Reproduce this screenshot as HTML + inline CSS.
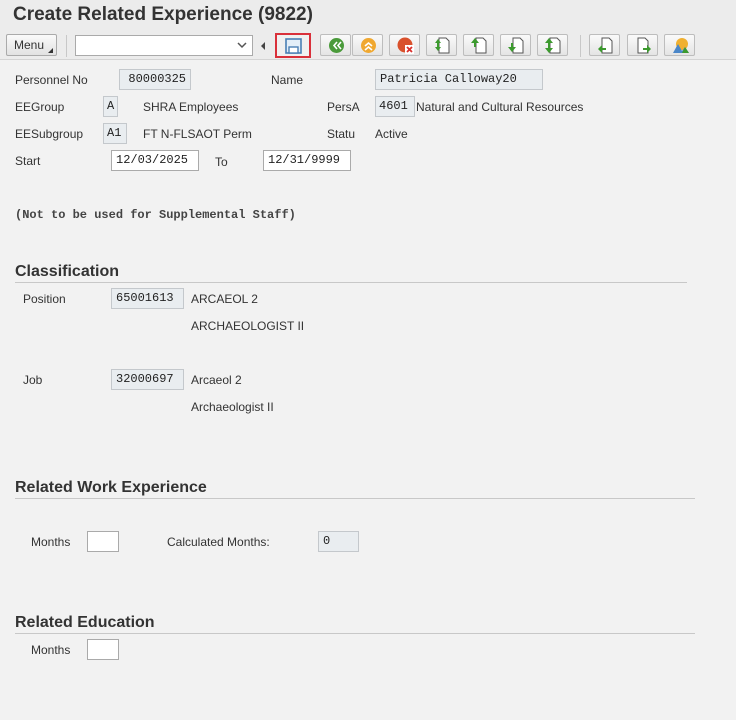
<!DOCTYPE html>
<html><head><meta charset="utf-8">
<style>
*{box-sizing:border-box;margin:0;padding:0}
body{width:736px;height:720px;background:#f2f2f2;font-family:"Liberation Sans",Arial,sans-serif;font-size:12px;color:#333;position:relative;overflow:hidden}
.a{position:absolute;white-space:nowrap}
.hdr{position:absolute;left:0;top:0;width:736px;height:60px;background:#ececec;border-bottom:1px solid #d4d4d4}
.t{position:absolute;left:13px;top:4px;font-size:19px;font-weight:bold;color:#333}
.btn{position:absolute;top:34px;height:22px;width:31px;border:1px solid #bdbdbd;background:linear-gradient(#fafafa,#e4e4e4);border-radius:2px}
.btn svg{position:absolute;left:7px;top:2px}
.lbl{position:absolute;font-size:12px;color:#333;white-space:nowrap}
.in{position:absolute;height:21px;border:1px solid #aaa;background:#fff;font-family:"Liberation Mono",monospace;font-size:12px;line-height:19px;padding-left:4px;color:#222}
.ro{background:#e9edf0;border-color:#c4c8cc}
h2{position:absolute;left:15px;font-size:16px;font-weight:bold;color:#333}
.ln{position:absolute;left:15px;height:1px;background:#c8c8c8}
</style></head><body>
<div class="hdr"></div>
<div class="t">Create Related Experience (9822)</div>
<div class="a" style="left:6px;top:34px;width:51px;height:22px;border:1px solid #aaa;background:linear-gradient(#fafafa,#e2e2e2);font-size:12px;line-height:20px;padding-left:7px;border-radius:2px">Menu<span style="position:absolute;right:3px;bottom:2px;width:0;height:0;border-left:5px solid transparent;border-bottom:5px solid #333"></span></div>
<div class="a" style="left:66px;top:35px;width:1px;height:22px;background:#c8c8c8"></div>
<div class="a" style="left:75px;top:35px;width:178px;height:21px;border:1px solid #aaa;background:#fff"><svg style="position:absolute;right:5px;top:6px" width="10" height="7"><path d="M1 1 L5 5 L9 1" stroke="#555" stroke-width="1.5" fill="none"/></svg></div>
<div class="a" style="left:261px;top:42px;width:0;height:0;border-top:4px solid transparent;border-bottom:4px solid transparent;border-right:4px solid #444"></div>
<div class="a" style="left:275px;top:33px;width:36px;height:25px;border:2px solid #d9303a;background:#f0f0f0"><svg style="position:absolute;left:8px;top:3px" width="17" height="16"><rect x="1" y="1" width="15" height="14" fill="#e3eef8" stroke="#4a7fb5" stroke-width="1.6"/><rect x="4" y="9" width="9" height="6" fill="#fff" stroke="#4a7fb5" stroke-width="1.4"/></svg></div>
<div class="btn" style="left:320px"><svg width="17" height="17"><circle cx="8.5" cy="8.5" r="7.5" fill="#4a9a3a"/><path d="M9 5 L6 8.5 L9 12 M13 5 L10 8.5 L13 12" stroke="#fff" stroke-width="1.6" fill="none"/></svg></div>
<div class="btn" style="left:352px"><svg width="17" height="17"><circle cx="8.5" cy="8.5" r="7.5" fill="#f0a830"/><path d="M5 9 L8.5 6 L12 9 M5 13 L8.5 10 L12 13" stroke="#fff" stroke-width="1.6" fill="none"/></svg></div>
<div class="btn" style="left:389px"><svg width="17" height="17"><circle cx="8" cy="8" r="7.5" fill="#d9512c"/><rect x="8" y="8" width="9" height="9" fill="#fff"/><path d="M10 10 L15 15 M15 10 L10 15" stroke="#d9302c" stroke-width="1.8"/></svg></div>
<div class="btn" style="left:426px"><svg width="17" height="17"><path d="M5 1 H12 L15 4 V16 H5 Z" fill="#fff" stroke="#555"/><path d="M4 2 L7 6 H1 Z M1 10 H7 L4 14 Z" fill="#3c9a2e"/><rect x="3" y="5" width="2" height="6" fill="#3c9a2e"/></svg></div>
<div class="btn" style="left:463px"><svg width="17" height="17"><path d="M5 1 H12 L15 4 V16 H5 Z" fill="#fff" stroke="#555"/><path d="M4 1 L8 6 H0 Z" fill="#3c9a2e"/><rect x="3" y="5" width="2" height="5" fill="#3c9a2e"/></svg></div>
<div class="btn" style="left:500px"><svg width="17" height="17"><path d="M5 1 H12 L15 4 V16 H5 Z" fill="#fff" stroke="#555"/><path d="M0 10 H8 L4 15 Z" fill="#3c9a2e"/><rect x="3" y="6" width="2" height="5" fill="#3c9a2e"/></svg></div>
<div class="btn" style="left:537px"><svg width="17" height="17"><path d="M5 1 H12 L15 4 V16 H5 Z" fill="#fff" stroke="#555"/><path d="M4 1 L8 6 H0 Z M0 11 H8 L4 16 Z" fill="#3c9a2e"/><rect x="3" y="5" width="2" height="7" fill="#3c9a2e"/></svg></div>
<div class="a" style="left:580px;top:35px;width:1px;height:22px;background:#c8c8c8"></div>
<div class="btn" style="left:589px"><svg width="17" height="17"><path d="M5 1 H12 L15 4 V16 H5 Z" fill="#fff" stroke="#555"/><path d="M1 12 L5 8 V16 Z" fill="#3c9a2e"/><rect x="4" y="11" width="5" height="2" fill="#3c9a2e"/></svg></div>
<div class="btn" style="left:627px"><svg width="17" height="17"><path d="M3 1 H10 L13 4 V16 H3 Z" fill="#fff" stroke="#555"/><path d="M16 12 L12 8 V16 Z" fill="#3c9a2e"/><rect x="8" y="11" width="5" height="2" fill="#3c9a2e"/></svg></div>
<div class="btn" style="left:664px"><svg width="18" height="17"><circle cx="10" cy="7" r="6" fill="#f0b030"/><path d="M1 16 L6 7 L10 14 L13 10 L17 16 Z" fill="#4a86c8"/><path d="M10 16 L13 10 L17 16 Z" fill="#3c9a2e"/></svg></div>

<div class="lbl" style="left:15px;top:73px">Personnel No</div>
<div class="in ro" style="left:119px;top:69px;width:72px;text-align:right;padding-right:4px">80000325</div>
<div class="lbl" style="left:271px;top:73px">Name</div>
<div class="in ro" style="left:375px;top:69px;width:168px">Patricia Calloway20</div>
<div class="lbl" style="left:15px;top:100px">EEGroup</div>
<div class="in ro" style="left:103px;top:96px;width:15px;padding-left:3px">A</div>
<div class="lbl" style="left:143px;top:100px">SHRA Employees</div>
<div class="lbl" style="left:327px;top:100px">PersA</div>
<div class="in ro" style="left:375px;top:96px;width:40px;padding-left:3px">4601</div>
<div class="lbl" style="left:416px;top:100px">Natural and Cultural Resources</div>
<div class="lbl" style="left:15px;top:127px">EESubgroup</div>
<div class="in ro" style="left:103px;top:123px;width:24px;padding-left:3px">A1</div>
<div class="lbl" style="left:143px;top:127px">FT N-FLSAOT Perm</div>
<div class="lbl" style="left:327px;top:127px">Statu</div>
<div class="lbl" style="left:375px;top:127px">Active</div>
<div class="lbl" style="left:15px;top:154px">Start</div>
<div class="in" style="left:111px;top:150px;width:88px">12/03/2025</div>
<div class="lbl" style="left:215px;top:155px">To</div>
<div class="in" style="left:263px;top:150px;width:88px">12/31/9999</div>
<div class="a" style="left:15px;top:208px;font-family:'Liberation Mono',monospace;font-weight:bold;font-size:12px;color:#444">(Not to be used for Supplemental Staff)</div>

<h2 style="top:263px">Classification</h2>
<div class="ln" style="top:282px;width:672px"></div>
<div class="lbl" style="left:23px;top:292px">Position</div>
<div class="in ro" style="left:111px;top:288px;width:73px">65001613</div>
<div class="lbl" style="left:191px;top:292px">ARCAEOL 2</div>
<div class="lbl" style="left:191px;top:319px">ARCHAEOLOGIST II</div>
<div class="lbl" style="left:23px;top:373px">Job</div>
<div class="in ro" style="left:111px;top:369px;width:73px">32000697</div>
<div class="lbl" style="left:191px;top:373px">Arcaeol 2</div>
<div class="lbl" style="left:191px;top:400px">Archaeologist II</div>

<h2 style="top:479px">Related Work Experience</h2>
<div class="ln" style="top:498px;width:680px"></div>
<div class="lbl" style="left:31px;top:535px">Months</div>
<div class="in" style="left:87px;top:531px;width:32px"></div>
<div class="lbl" style="left:167px;top:535px">Calculated Months:</div>
<div class="in ro" style="left:318px;top:531px;width:41px">0</div>

<h2 style="top:614px">Related Education</h2>
<div class="ln" style="top:633px;width:680px"></div>
<div class="lbl" style="left:31px;top:643px">Months</div>
<div class="in" style="left:87px;top:639px;width:32px"></div>
</body></html>
